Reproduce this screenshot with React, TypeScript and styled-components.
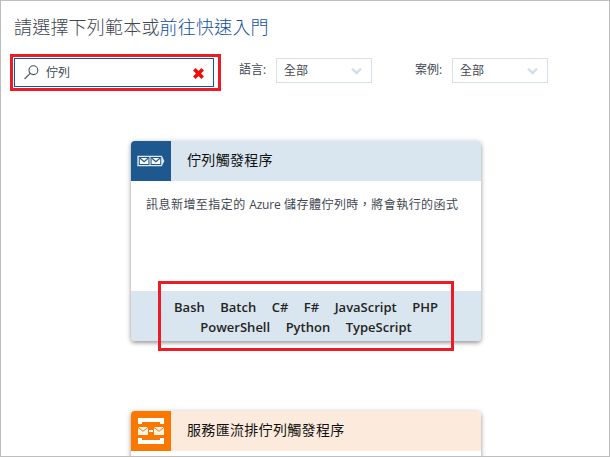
import React from "react";
import styled, { createGlobalStyle } from "styled-components";

const GlobalStyle = createGlobalStyle`
  *, *::before, *::after { box-sizing: border-box; }
  body {
    margin: 0;
    background: #fff;
    font-family: "Open Sans", "Noto Sans CJK TC", sans-serif;
    color: #3f4852;
  }
`;

const Page = styled.main`
  width: 610px;
  height: 457px;
  overflow: hidden;
  border: 1px solid #bebebe;
  background: #fff;
`;

const Heading = styled.h1`
  margin: 12px 0 0 13px;
  font-size: 18px;
  line-height: 28px;
  font-weight: 300;
  letter-spacing: 0.2px;
  white-space: nowrap;
  color: #3f4852;
`;

const QuickstartLink = styled.a`
  color: #124fa2;
  text-decoration: none;
`;

const FilterBar = styled.div`
  display: flex;
  align-items: flex-start;
  margin: 13px 0 0 9px;
  height: 37px;
`;

const SearchHighlight = styled.div`
  flex: none;
  width: 211px;
  height: 37px;
  padding: 1px 4px 1px 1px;
  border: 3px solid #ed1c24;
`;

const SearchBox = styled.div`
  display: flex;
  align-items: center;
  width: 200px;
  height: 29px;
  padding: 0 9px;
  border: 1px solid #0f54a5;
  font-size: 12px;
  line-height: 18px;
`;

const SearchText = styled.span`
  flex: 1;
  margin-left: 7px;
`;

const Filter = styled.label<{ $gap: number }>`
  display: flex;
  flex: none;
  margin: 4px 0 0 ${(p) => p.$gap}px;
  font-size: 12px;
`;

const FilterName = styled.span`
  width: 37px;
  line-height: 23px;
`;

const SelectBox = styled.span`
  display: flex;
  align-items: center;
  justify-content: space-between;
  width: 96px;
  height: 25px;
  padding: 0 9px 0 7px;
  border: 1px solid #d5e0e7;
  line-height: 22px;
`;

const CardList = styled.section`
  display: grid;
  gap: 70px;
  margin: 50px 0 0 130px;
`;

const Card = styled.article`
  position: relative;
  display: flex;
  flex-direction: column;
  width: 350px;
  height: 200px;
  border-radius: 4px;
  background: #fff;
  box-shadow: 0 2px 4px rgba(0, 0, 0, 0.36), 0 0 6px rgba(0, 0, 0, 0.1);
`;

const CardHeader = styled.header<{ $tint: string }>`
  display: flex;
  height: 40px;
  border-radius: 4px 4px 0 0;
  overflow: hidden;
  background: ${(p) => p.$tint};
`;

const IconTile = styled.div<{ $color: string }>`
  display: flex;
  width: 40px;
  height: 40px;
  background: ${(p) => p.$color};
`;

const CardTitle = styled.h2`
  margin: 0 0 0 16px;
  font-size: 14px;
  line-height: 38px;
  font-weight: 400;
  letter-spacing: 0.32px;
  color: #111;
`;

const Description = styled.p`
  flex: 1;
  margin: 0;
  padding: 14px 15px;
  font-size: 12px;
  line-height: 20px;
  letter-spacing: 0.46px;
  white-space: nowrap;
`;

const ProductName = styled.span`
  letter-spacing: -0.2px;
`;

const TagFooter = styled.footer<{ $tint: string }>`
  display: flex;
  flex-direction: column;
  height: 50px;
  padding-top: 6px;
  border-radius: 0 0 4px 4px;
  background: ${(p) => p.$tint};
`;

const TagRow = styled.div`
  display: flex;
  justify-content: center;
  gap: 15.5px;
  height: 20px;
  font-size: 13px;
  line-height: 20px;
  font-weight: 600;
  color: #242424;
`;

const TagHighlight = styled.div`
  position: absolute;
  left: 27px;
  top: 140px;
  width: 296px;
  height: 70px;
  border: 3px solid #ed1c24;
`;

const SearchIcon = () => (
  <svg width="15" height="15" viewBox="0 0 15 15" fill="none" stroke="#48515b" strokeWidth="1.1">
    <circle cx="9.4" cy="5.2" r="4.4" />
    <path d="M6.2 8.4 0.6 14" />
  </svg>
);

const ClearIcon = () => (
  <svg width="11" height="13" viewBox="0 0 11 13" fill="none" stroke="#f20a05" strokeWidth="3.5">
    <path d="M1.3 3.3 9.7 11.7M9.7 3.3 1.3 11.7" />
  </svg>
);

const Chevron = () => (
  <svg width="11" height="8" viewBox="0 0 11 8" fill="none" stroke="#d2dee6" strokeWidth="2.2">
    <path d="M1 1.6 5.5 6.1 10 1.6" />
  </svg>
);

const QueueIcon = () => (
  <svg width="40" height="40" viewBox="0 0 40 40" fill="none">
    <path d="M6.3 14.8H30.8L33.4 20 30.8 25.2H6.3Z" fill="#dce8f2" />
    <rect x="7.8" y="16" width="10.6" height="8" fill="#1d588f" />
    <rect x="19.6" y="16" width="10.6" height="8" fill="#1d588f" />
    <rect x="8.8" y="17" width="8.6" height="6" fill="#fff" />
    <rect x="20.6" y="17" width="8.6" height="6" fill="#fff" />
    <path d="M8.8 17 13.1 20.6 17.4 17M20.6 17 24.9 20.6 29.2 17" stroke="#1d588f" strokeWidth="1.2" />
  </svg>
);

const ServiceBusIcon = () => (
  <svg width="40" height="40" viewBox="0 0 40 40" fill="none">
    <path d="M7 13V7H33V13H29V11H11V13ZM7 27V33H33V27H29V29H11V27Z" fill="#fff" />
    <rect x="7" y="16" width="10" height="8" fill="#fff3e6" />
    <rect x="23" y="16" width="10" height="8" fill="#fff3e6" />
    <rect x="18" y="19" width="4" height="2" fill="#fff" />
    <path d="M7 16.3 12 20.3 17 16.3M23 16.3 28 20.3 33 16.3" stroke="#f87800" strokeWidth="1" />
  </svg>
);

const tagRows = [
  ["Bash", "Batch", "C#", "F#", "JavaScript", "PHP"],
  ["PowerShell", "Python", "TypeScript"],
];

function SelectFilter({ name, gap }: { name: string; gap: number }) {
  return (
    <Filter $gap={gap}>
      <FilterName>{name}</FilterName>
      <SelectBox>
        全部
        <Chevron />
      </SelectBox>
    </Filter>
  );
}

export default function App() {
  return (
    <>
      <GlobalStyle />
      <Page>
        <Heading>
          請選擇下列範本或<QuickstartLink>前往快速入門</QuickstartLink>
        </Heading>
        <FilterBar>
          <SearchHighlight>
            <SearchBox>
              <SearchIcon />
              <SearchText>佇列</SearchText>
              <ClearIcon />
            </SearchBox>
          </SearchHighlight>
          <SelectFilter name="語言:" gap={18} />
          <SelectFilter name="案例:" gap={43} />
        </FilterBar>
        <CardList>
          <Card>
            <CardHeader $tint="#d9e6ef">
              <IconTile $color="#1d588f">
                <QueueIcon />
              </IconTile>
              <CardTitle>佇列觸發程序</CardTitle>
            </CardHeader>
            <Description>
              訊息新增至指定的 <ProductName>Azure</ProductName> 儲存體佇列時，將會執行的函式
            </Description>
            <TagFooter $tint="#d9e6ef">
              {tagRows.map((row) => (
                <TagRow key={row[0]}>
                  {row.map((tag) => (
                    <span key={tag}>{tag}</span>
                  ))}
                </TagRow>
              ))}
            </TagFooter>
            <TagHighlight />
          </Card>
          <Card>
            <CardHeader $tint="#fcebdc">
              <IconTile $color="#f87800">
                <ServiceBusIcon />
              </IconTile>
              <CardTitle>服務匯流排佇列觸發程序</CardTitle>
            </CardHeader>
          </Card>
        </CardList>
      </Page>
    </>
  );
}
